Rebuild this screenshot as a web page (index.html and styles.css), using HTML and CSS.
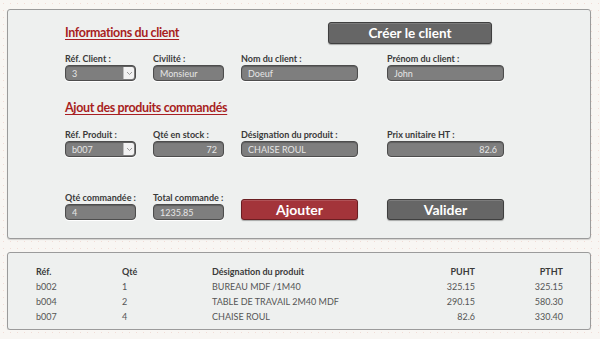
FILE: index.html
```html
<!DOCTYPE html>
<html lang="fr">
<head>
    <meta charset="UTF-8">
    <title>Commandes clients</title>
    <link rel="stylesheet" href="styles.css">
</head>
<body>
    <!-- Saisie de la commande -->
    <div class="panel form-panel">
        <div class="title-row">
            <h2>Informations du client</h2>
            <button class="btn btn-grey btn-create">Créer le client</button>
        </div>

        <div class="fields">
            <div class="field">
                <label>Réf. Client :</label>
                <div class="select w-small">
                    <input type="text" value="3" readonly>
                    <span class="arrow"><svg width="7" height="5" viewBox="0 0 7 5"><path d="M1 1l2.5 2.5L6 1" fill="none" stroke="#999" stroke-width="1"/></svg></span>
                </div>
            </div>
            <div class="field">
                <label>Civilité :</label>
                <input class="w-small" type="text" value="Monsieur" readonly>
            </div>
            <div class="field">
                <label>Nom du client :</label>
                <input class="w-large" type="text" value="Doeuf" readonly>
            </div>
            <div class="field">
                <label>Prénom du client :</label>
                <input class="w-large" type="text" value="John" readonly>
            </div>
        </div>

        <h2 class="second-title">Ajout des produits commandés</h2>

        <div class="fields">
            <div class="field">
                <label>Réf. Produit :</label>
                <div class="select w-small">
                    <input type="text" value="b007" readonly>
                    <span class="arrow"><svg width="7" height="5" viewBox="0 0 7 5"><path d="M1 1l2.5 2.5L6 1" fill="none" stroke="#999" stroke-width="1"/></svg></span>
                </div>
            </div>
            <div class="field">
                <label>Qté en stock :</label>
                <input class="w-small num" type="text" value="72" readonly>
            </div>
            <div class="field">
                <label>Désignation du produit :</label>
                <input class="w-large" type="text" value="CHAISE ROUL" readonly>
            </div>
            <div class="field">
                <label>Prix unitaire HT :</label>
                <input class="w-large num" type="text" value="82.6" readonly>
            </div>
        </div>

        <div class="fields last-row">
            <div class="field">
                <label>Qté commandée :</label>
                <input class="w-small" type="text" value="4" readonly>
            </div>
            <div class="field">
                <label>Total commande :</label>
                <input class="w-small" type="text" value="1235.85" readonly>
            </div>
            <div class="field">
                <button class="btn btn-red w-large">Ajouter</button>
            </div>
            <div class="field">
                <button class="btn btn-grey w-large">Valider</button>
            </div>
        </div>
    </div>

    <!-- Récapitulatif -->
    <div class="panel list-panel">
        <table class="recap">
            <colgroup>
                <col class="c-ref"><col class="c-qte"><col class="c-des"><col class="c-pu"><col class="c-pt">
            </colgroup>
            <thead>
                <tr><th>Réf.</th><th>Qté</th><th>Désignation du produit</th><th class="right">PUHT</th><th class="right">PTHT</th></tr>
            </thead>
            <tbody>
                <tr><td>b002</td><td>1</td><td>BUREAU MDF /1M40</td><td class="right">325.15</td><td class="right">325.15</td></tr>
                <tr><td>b004</td><td>2</td><td>TABLE DE TRAVAIL 2M40 MDF</td><td class="right">290.15</td><td class="right">580.30</td></tr>
                <tr><td>b007</td><td>4</td><td>CHAISE ROUL</td><td class="right">82.6</td><td class="right">330.40</td></tr>
            </tbody>
        </table>
    </div>
</body>
</html>
```

FILE: styles.css
```css
body {
    margin: 0;
    font-family: Lato, "Open Sans", sans-serif;
    background-color: #f8f6f3;
    background-image: radial-gradient(#f1dcd6 0.6px, transparent 1px);
    background-size: 7px 7px;
    color: #333;
}

.panel {
    margin: 9px 7px 0 7px;
    width: 584px;
    box-sizing: border-box;
    background: #eef0ef;
    border: 1px solid #9b9b9b;
    border-radius: 3px;
    box-shadow: 0 1px 1px rgba(0, 0, 0, 0.15);
}

/* Formulaire */
.form-panel {
    height: 230px;
    padding: 12px 0 0 57px;
}

.title-row {
    display: grid;
    grid-template-columns: 263px 164px;
    align-items: center;
}

h2 {
    margin: 0;
    font-size: 12.5px;
    letter-spacing: -0.35px;
    font-weight: bold;
    color: #a81e22;
    text-decoration: underline;
    text-underline-offset: 2px;
    line-height: 16px;
}

.second-title {
    margin-top: 19px;
}

.fields {
    display: grid;
    grid-template-columns: 88px 88px 146px 117px;
    margin-top: 9px;
    align-items: end;
}

.second-title + .fields {
    margin-top: 13px;
}

.last-row {
    margin-top: 35px;
}

.field label {
    display: block;
    font-size: 9px;
    font-weight: bold;
    color: #3a3a3a;
    line-height: 11px;
    height: 11px;
    margin-bottom: 1px;
    white-space: nowrap;
}

input {
    display: block;
    box-sizing: border-box;
    height: 16px;
    padding: 0 6px;
    margin: 0;
    font-family: Lato, "Open Sans", sans-serif;
    font-size: 9px;
    color: #e6e6e6;
    background: #7e7e7e;
    border: 1px solid #4d4d4d;
    border-radius: 4px;
    box-shadow: inset 0 1px 1px rgba(0, 0, 0, 0.25), 0 1px 0 #fff;
    outline: none;
}

.w-small { width: 71px; }
.w-large { width: 117px; }

.num { text-align: right; }

.select {
    position: relative;
}

.select input {
    width: 100%;
}

.select .arrow {
    position: absolute;
    top: 2px;
    right: 2px;
    width: 10px;
    height: 12px;
    background: #f2f2f2;
    border-left: 1px solid #bdbdbd;
    border-radius: 0 2px 2px 0;
    display: flex;
    align-items: center;
    justify-content: center;
}

.btn {
    display: block;
    height: 21px;
    padding: 0;
    font-family: Lato, "Open Sans", sans-serif;
    font-size: 14px;
    font-weight: bold;
    color: #fff;
    border: 1px solid #3f3f3f;
    border-radius: 3px;
    box-shadow: 0 1px 1px rgba(0, 0, 0, 0.3), inset 0 1px 0 rgba(255, 255, 255, 0.15);
    cursor: pointer;
}

.btn-grey { background: #666; }
.btn-red { background: #a3343a; border-color: #6b1e22; }

.btn-create {
    width: 164px;
    height: 22px;
    font-size: 13.5px;
}

/* Tableau recap */
.list-panel {
    margin-top: 13px;
    height: 78px;
    padding: 11px 0 0 28px;
}

.recap {
    border-collapse: collapse;
    table-layout: fixed;
    width: 527px;
    font-size: 9px;
}

.c-ref { width: 86px; }
.c-qte { width: 90px; }
.c-des { width: 200px; }
.c-pu { width: 63px; }
.c-pt { width: 88px; }

.recap th, .recap td {
    padding: 0;
    height: 15px;
    text-align: left;
    color: #555;
    white-space: nowrap;
}

.recap th {
    font-weight: bold;
    color: #3a3a3a;
}

.recap .right { text-align: right; }
```
